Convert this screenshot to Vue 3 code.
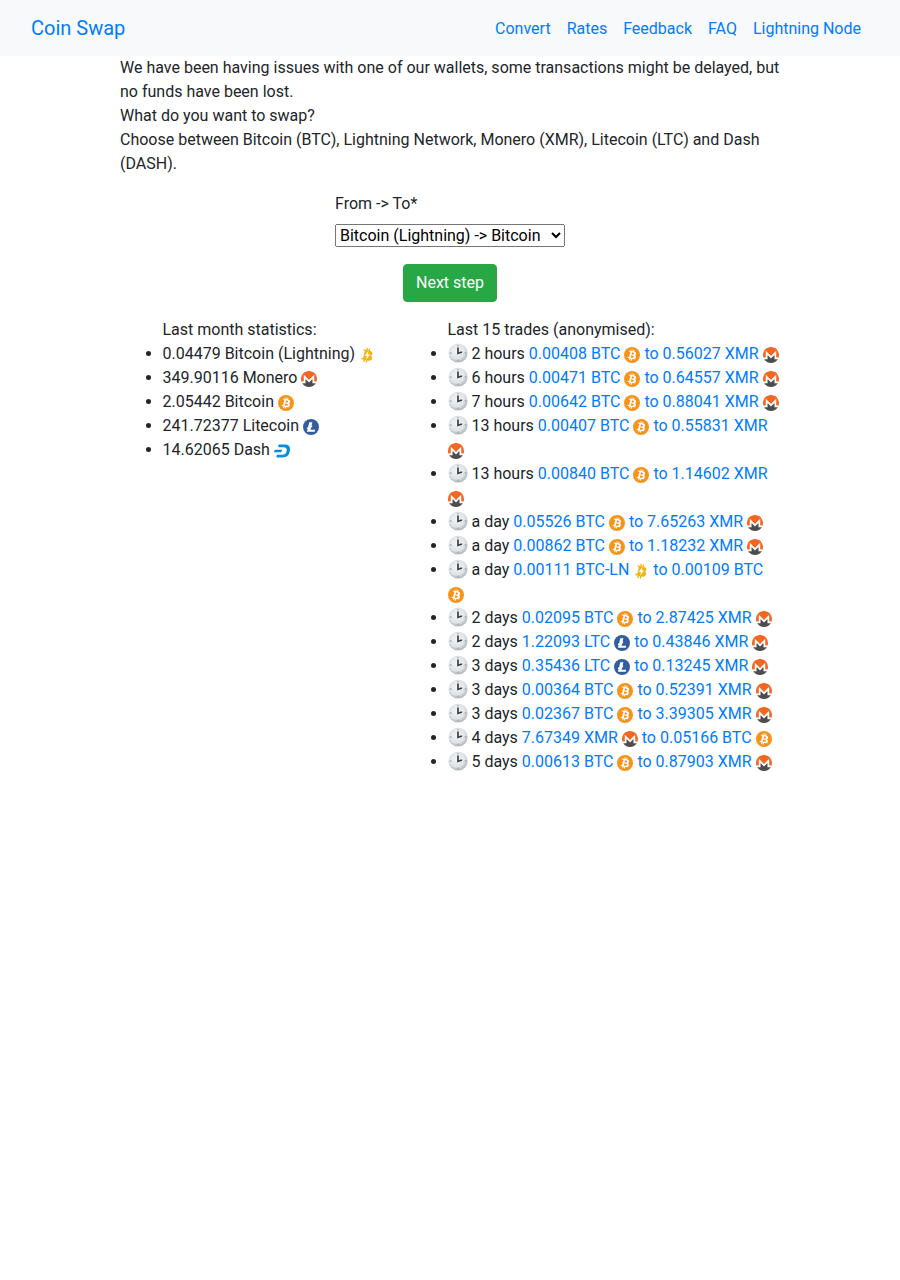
<template>
  <div class="page">
    <nav class="navbar">
      <a class="brand" href="#">Coin Swap</a>
      <ul class="nav-links">
        <li v-for="link in navLinks" :key="link"><a href="#">{{ link }}</a></li>
      </ul>
    </nav>

    <main class="content">
      <p class="intro">
        We have been having issues with one of our wallets, some transactions might be delayed, but no funds have been lost.<br>
        What do you want to swap?<br>
        Choose between Bitcoin (BTC), Lightning Network, Monero (XMR), Litecoin (LTC) and Dash (DASH).
      </p>

      <form class="swap-form" @submit.prevent>
        <label for="pair">From -&gt; To*</label>
        <select id="pair">
          <option>Bitcoin (Lightning) -&gt; Bitcoin</option>
        </select>
        <button class="next-btn" type="submit">Next step</button>
      </form>

      <div class="stats">
        <div class="stats-col">
          <div class="col-title">Last month statistics:</div>
          <ul>
            <li v-for="s in stats" :key="s.label">
              {{ s.label }}
              <svg class="coin" viewBox="0 0 16 16"><use :href="'#' + s.coin" /></svg>
            </li>
          </ul>
        </div>
        <div class="trades-col">
          <div class="col-title">Last 15 trades (anonymised):</div>
          <ul>
            <li v-for="(t, i) in trades" :key="i">
              <svg class="clock" viewBox="0 0 20 20"><use href="#clock" /></svg>
              {{ t.age }}
              <a href="#">{{ t.from }}
                <svg class="coin" viewBox="0 0 16 16"><use :href="'#' + t.fromCoin" /></svg>
                to {{ t.to }}
                <svg class="coin" viewBox="0 0 16 16"><use :href="'#' + t.toCoin" /></svg>
              </a>
            </li>
          </ul>
        </div>
      </div>
    </main>

    <svg class="sprites" width="0" height="0">
      <defs>
        <radialGradient id="clock-face" cx="45%" cy="40%" r="60%">
          <stop offset="0" stop-color="#f4f5f6" />
          <stop offset="0.7" stop-color="#dfe3e6" />
          <stop offset="1" stop-color="#a9b0b5" />
        </radialGradient>
      </defs>
      <symbol id="clock" viewBox="0 0 20 20">
        <circle cx="10" cy="10" r="9.5" fill="url(#clock-face)" />
        <path d="M10 1.8v1.6M10 16.6v1.6M1.8 10h1.6M16.6 10h1.6" stroke="#8d959a" stroke-width="1" />
        <path d="M10 4.4V10.4L14 9" fill="none" stroke="#3b4145" stroke-width="1.7" />
      </symbol>
      <symbol id="btc" viewBox="0 0 32 32">
        <circle cx="16" cy="16" r="16" fill="#f7931a" />
        <path transform="translate(16 16) scale(1.15) translate(-16 -16)" d="M23.189 14.02c.314-2.096-1.283-3.223-3.465-3.975l.708-2.84-1.728-.43-.69 2.765c-.454-.114-.92-.22-1.385-.326l.695-2.783L15.596 6l-.708 2.839c-.376-.086-.746-.17-1.104-.26l.002-.009-2.384-.595-.46 1.846s1.283.294 1.256.312c.7.175.826.638.805 1.006l-.806 3.235c.048.012.11.03.18.057l-.183-.045-1.13 4.532c-.086.212-.303.531-.793.41.018.025-1.256-.313-1.256-.313l-.858 1.978 2.25.561c.418.105.828.215 1.231.318l-.715 2.872 1.727.43.708-2.84c.472.127.93.245 1.378.357l-.706 2.828 1.728.43.715-2.866c2.948.558 5.164.333 6.097-2.333.752-2.146-.037-3.385-1.588-4.192 1.13-.26 1.98-1.003 2.207-2.538zm-3.95 5.538c-.533 2.147-4.148.986-5.32.695l.95-3.805c1.172.293 4.929.872 4.37 3.11zm.535-5.569c-.487 1.953-3.495.96-4.47.717l.86-3.45c.975.243 4.118.696 3.61 2.733z" fill="#fff" />
      </symbol>
      <symbol id="ln" viewBox="6 5 20 21.4">
        <path d="M23.189 14.02c.314-2.096-1.283-3.223-3.465-3.975l.708-2.84-1.728-.43-.69 2.765c-.454-.114-.92-.22-1.385-.326l.695-2.783L15.596 6l-.708 2.839c-.376-.086-.746-.17-1.104-.26l.002-.009-2.384-.595-.46 1.846s1.283.294 1.256.312c.7.175.826.638.805 1.006l-.806 3.235c.048.012.11.03.18.057l-.183-.045-1.13 4.532c-.086.212-.303.531-.793.41.018.025-1.256-.313-1.256-.313l-.858 1.978 2.25.561c.418.105.828.215 1.231.318l-.715 2.872 1.727.43.708-2.84c.472.127.93.245 1.378.357l-.706 2.828 1.728.43.715-2.866c2.948.558 5.164.333 6.097-2.333.752-2.146-.037-3.385-1.588-4.192 1.13-.26 1.98-1.003 2.207-2.538z" fill="#f5b30c" />
        <path d="M18.2 9.6 13 16.9h3l-1.4 5.4 5.4-7.7h-3z" fill="#fff" />
      </symbol>
      <symbol id="xmr" viewBox="0 0 24 24">
        <circle cx="12" cy="12" r="12" fill="#fff" />
        <path d="M12 0C5.365 0 0 5.373 0 12.015c0 1.335.228 2.607.618 3.81h3.577V5.729L12 13.545l7.805-7.815v10.095h3.577c.389-1.203.618-2.475.618-3.81C24 5.375 18.635 0 12 0z" fill="#f26822" />
        <path d="M10.212 15.307l-3.417-3.421v6.351H1.758C3.87 21.689 7.678 24 12 24s8.162-2.311 10.245-5.764h-5.04v-6.351l-3.386 3.421-1.788 1.79-1.82-1.79h.001z" fill="#4d4d4d" />
      </symbol>
      <symbol id="ltc" viewBox="0 0 32 32">
        <circle cx="16" cy="16" r="16" fill="#345d9d" />
        <path transform="translate(16 16) scale(1.2) translate(-16 -16)" d="M10.427 19.214L9 19.768l.688-2.759 1.444-.58L13.213 8h5.129l-1.519 6.196 1.41-.571-.68 2.75-1.427.571-.848 3.483H23L22.127 24H9.252z" fill="#fff" />
      </symbol>
      <symbol id="dash" viewBox="0 0 24 24">
        <path d="M3.21 9.967C.922 9.967.595 11.457.38 12.36.093 13.538 0 14.02 0 14.02h8.947c2.29 0 2.617-1.492 2.832-2.394.285-1.178.379-1.66.379-1.66zM15.72 2.26H6.982L6.26 6.307l7.884.01c3.885 0 5.03 1.41 4.997 3.748-.019 1.196-.537 3.225-.762 3.884-.598 1.753-1.827 3.749-6.435 3.744l-7.666-.004-.725 4.052h8.718c3.075 0 4.38-.36 5.767-.995 3.071-1.426 4.9-4.455 5.633-8.41C24.76 6.448 23.403 2.26 15.72 2.26z" fill="#008de4" />
      </symbol>
    </svg>
  </div>
</template>

<script setup>
const navLinks = ['Convert', 'Rates', 'Feedback', 'FAQ', 'Lightning Node']

const stats = [
  { label: '0.04479 Bitcoin (Lightning)', coin: 'ln' },
  { label: '349.90116 Monero', coin: 'xmr' },
  { label: '2.05442 Bitcoin', coin: 'btc' },
  { label: '241.72377 Litecoin', coin: 'ltc' },
  { label: '14.62065 Dash', coin: 'dash' }
]

const trade = (age, from, fromCoin, to, toCoin) => ({ age, from, fromCoin, to, toCoin })

const trades = [
  trade('2 hours', '0.00408 BTC', 'btc', '0.56027 XMR', 'xmr'),
  trade('6 hours', '0.00471 BTC', 'btc', '0.64557 XMR', 'xmr'),
  trade('7 hours', '0.00642 BTC', 'btc', '0.88041 XMR', 'xmr'),
  trade('13 hours', '0.00407 BTC', 'btc', '0.55831 XMR', 'xmr'),
  trade('13 hours', '0.00840 BTC', 'btc', '1.14602 XMR', 'xmr'),
  trade('a day', '0.05526 BTC', 'btc', '7.65263 XMR', 'xmr'),
  trade('a day', '0.00862 BTC', 'btc', '1.18232 XMR', 'xmr'),
  trade('a day', '0.00111 BTC-LN', 'ln', '0.00109 BTC', 'btc'),
  trade('2 days', '0.02095 BTC', 'btc', '2.87425 XMR', 'xmr'),
  trade('2 days', '1.22093 LTC', 'ltc', '0.43846 XMR', 'xmr'),
  trade('3 days', '0.35436 LTC', 'ltc', '0.13245 XMR', 'xmr'),
  trade('3 days', '0.00364 BTC', 'btc', '0.52391 XMR', 'xmr'),
  trade('3 days', '0.02367 BTC', 'btc', '3.39305 XMR', 'xmr'),
  trade('4 days', '7.67349 XMR', 'xmr', '0.05166 BTC', 'btc'),
  trade('5 days', '0.00613 BTC', 'btc', '0.87903 XMR', 'xmr')
]
</script>

<style>
body {
  background: #fff;
}
</style>

<style scoped>
.page {
  font-family: Roboto, "Liberation Sans", sans-serif;
  font-size: 16px;
  line-height: 24px;
  color: #212529;
}

a {
  color: #007bff;
  text-decoration: none;
}

.navbar {
  display: flex;
  align-items: center;
  justify-content: space-between;
  height: 56px;
  box-sizing: border-box;
  padding: 0 31px;
  background: #f8f9fa;
}

.brand {
  font-size: 20px;
  line-height: 30px;
}

.nav-links {
  display: flex;
  margin: 0;
  padding: 1px 0 0;
  list-style: none;
}

.nav-links a {
  display: block;
  padding: 0 8px;
}

.content {
  width: 660px;
  margin: 0 auto;
}

.intro {
  margin: 0 0 16px;
}

.swap-form {
  display: flex;
  flex-direction: column;
  align-items: center;
  margin-bottom: 16px;
}

.swap-form label {
  align-self: flex-start;
  margin: 0 0 8px 215px;
}

.swap-form select {
  width: 230px;
  height: 23px;
  margin-bottom: 17px;
  font-family: Roboto, sans-serif;
  font-size: 16px;
}

.next-btn {
  padding: 6px 12px;
  line-height: 24px;
  border: 1px solid #28a745;
  border-radius: 4px;
  background: #28a745;
  color: #fff;
  font-family: inherit;
  font-size: 16px;
}

.stats {
  display: grid;
  grid-template-columns: 285px 1fr;
  margin-right: -2.5px;
  padding-left: 2.5px;
}

.col-title {
  padding-left: 40px;
}

.stats ul {
  margin: 0;
  padding-left: 40px;
}

.coin {
  width: 16px;
  height: 16px;
  vertical-align: middle;
}

.clock {
  width: 20px;
  height: 20px;
  vertical-align: -4px;
}

.sprites {
  position: absolute;
}
</style>
